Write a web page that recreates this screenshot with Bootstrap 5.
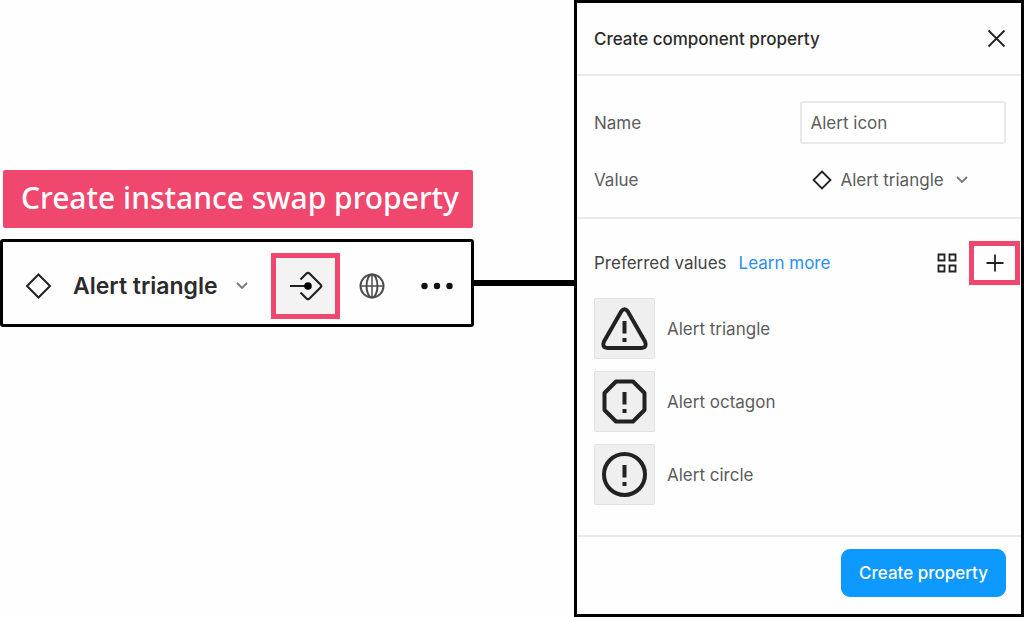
<!DOCTYPE html>
<html lang="en">
<head>
<meta charset="utf-8">
<meta name="viewport" content="width=device-width, initial-scale=1">
<title>Create instance swap property</title>
<link href="https://cdn.jsdelivr.net/npm/bootstrap@5.3.0/dist/css/bootstrap.min.css" rel="stylesheet">
<style>
  :root { --pink: #f0476f; --ink: #222; --soft: #5c5c5c; --rule: #e9e9e9; }
  body { font-family: Inter, "Liberation Sans", sans-serif; font-size: 17px; line-height: 24px; color: var(--soft); background: #fefefe; }
  svg { display: block; flex: none; fill: none; stroke: var(--ink); }
  .stage { display: grid; grid-template-columns: 574fr 450fr; }
  .callout { display: grid; grid-template-columns: 474fr 100fr; align-content: start; row-gap: 11px; padding-top: 170px; }
  .callout-title { margin: 0 1px 0 3px; padding: 7px 0 9px 18px; background: var(--pink); color: #fff; border-radius: 2px; font: 500 30px/42px "Noto Sans", "Open Sans", sans-serif; white-space: nowrap; }
  .toolbar { grid-column: 1; border: 3px solid #000; border-radius: 3px; background: #fefefe; padding: 11px 0 5px 20px; }
  .connector { height: 6px; background: #000; align-self: center; }
  .tool { border: 0; background: none; padding: 0; display: flex; align-items: center; justify-content: center; }
  .marked { border: 5px solid var(--pink); }
  .tool-swap { width: 69px; height: 66px; background: #f3f3f3; margin-left: 22px; }
  .tool-globe { width: 63px; height: 66px; }
  .tool-more { width: 68px; height: 66px; }
  .picker { appearance: none; border: 0; padding: 0; background: transparent url("data:image/svg+xml,%3Csvg xmlns='http://www.w3.org/2000/svg' width='14' height='10' fill='none' stroke='%23777' stroke-width='1.8'%3E%3Cpath d='M2 2l5 5 5-5'/%3E%3C/svg%3E") no-repeat right center; }
  .picker-lg { width: 176px; margin-left: 20px; font-size: 23px; line-height: 32px; font-weight: 600; color: #2b2b2b; }
  .picker-sm { width: 128px; margin-left: 9px; color: var(--soft); }
  .panel { border: 3px solid #000; background: #fefefe; min-height: 100vh; }
  .panel-part { padding: 0 15px 0 17px; border-bottom: 2px solid var(--rule); }
  .panel-head { height: 73px; color: #2b2b2b; }
  .panel-head h1 { font-size: 17px; line-height: 24px; font-weight: 500; }
  .field-grid { display: grid; grid-template-columns: 206fr 207fr; align-items: center; row-gap: 24px; padding-top: 25px; padding-bottom: 25px; }
  .name-box { border: 2px solid var(--rule); border-radius: 3px; padding: 8px 9px; font-size: 17px; line-height: 24px; color: var(--soft); background: #fff; height: 43px; }
  .values { padding-top: 22px; }
  .values-head { height: 44px; margin-right: -14px; margin-bottom: 13px; color: #444; }
  .values-head a { color: #2a8fee; text-decoration: none; }
  .values-list { display: grid; row-gap: 12px; }
  .values-list li { column-gap: 12px; }
  .tool-add { width: 51px; height: 44px; margin-left: 12px; }
  .tile { width: 61px; height: 61px; background: #efefef; border: 1px solid #e2e2e2; border-radius: 2px; }
  .panel-foot { padding: 12px 15px 17px; }
  .btn-make { --bs-btn-bg: #0d99ff; --bs-btn-border-color: #0d99ff; --bs-btn-color: #fff; --bs-btn-hover-bg: #0b87e0; --bs-btn-hover-color: #fff; --bs-btn-font-weight: 500; --bs-btn-font-size: 17px; --bs-btn-line-height: 24px; --bs-btn-padding-x: 17px; --bs-btn-padding-y: 11px; --bs-btn-border-radius: 9px; white-space: nowrap; }
</style>
</head>
<body>
<main class="stage">
  <section class="callout">
    <h2 class="callout-title">Create instance swap property</h2>
    <div class="toolbar d-flex align-items-center" role="toolbar" aria-label="Instance">
      <svg width="30" height="30" viewBox="0 0 30 30" stroke-width="2"><path d="M15.500 3.500L27 15 15.500 26.500 4 15z"/></svg>
      <select class="picker picker-lg" aria-label="Instance"><option>Alert triangle</option></select>
      <button class="tool tool-swap marked" aria-label="Create instance swap property">
        <svg width="36" height="32" viewBox="0 0 36 32" stroke-width="2.200"><path d="M12.500 9.500l6-6q1.500-1.500 3 0l11 11q1.500 1.500 0 3l-11 11q-1.500 1.500-3 0l-6-6M2 16h18"/><circle cx="20" cy="16" r="3.800" fill="#000" stroke="none"/></svg>
      </button>
      <button class="tool tool-globe" aria-label="Publish">
        <svg width="28" height="28" viewBox="0 0 28 28" stroke-width="2" style="stroke:#4d4d4d"><circle cx="14" cy="14" r="11.500"/><ellipse cx="14" cy="14" rx="5.500" ry="11.500"/><path d="M2.500 14h23M14 2.500v23" stroke-width="1.500"/></svg>
      </button>
      <button class="tool tool-more" aria-label="More">
        <svg width="34" height="8" viewBox="0 0 34 8"><g fill="#111" stroke="none"><circle cx="4.500" cy="4" r="3.200"/><circle cx="17" cy="4" r="3.200"/><circle cx="29.500" cy="4" r="3.200"/></g></svg>
      </button>
    </div>
    <div class="connector"></div>
  </section>

  <section class="panel d-flex flex-column">
    <header class="panel-part panel-head d-flex align-items-center justify-content-between">
      <h1 class="m-0">Create component property</h1>
      <button class="tool" aria-label="Close"><svg width="19" height="19" viewBox="0 0 19 19" stroke-width="1.800"><path d="M1.500 1.500l16 16M17.500 1.500l-16 16"/></svg></button>
    </header>
    <div class="panel-part field-grid">
      <label for="prop-name">Name</label>
      <input id="prop-name" class="name-box w-100" type="text" value="Alert icon">
      <label for="prop-value">Value</label>
      <div class="d-flex align-items-center ps-2 ms-1">
        <svg width="20" height="20" viewBox="0 0 20 20" stroke-width="1.800"><path d="M10 1.500L18.500 10 10 18.500 1.500 10z"/></svg>
        <select id="prop-value" class="picker picker-sm"><option>Alert triangle</option></select>
      </div>
    </div>
    <div class="panel-part values flex-grow-1">
      <div class="values-head d-flex align-items-center">
        <span>Preferred values</span>
        <a href="#" class="ms-2 ps-1">Learn more</a>
        <button class="tool ms-auto" aria-label="Show as grid"><svg width="20" height="20" viewBox="0 0 20 20" stroke-width="1.800"><path d="M1.500 1.500h6v6h-6zM12.500 1.500h6v6h-6zM1.500 12.500h6v6h-6zM12.500 12.500h6v6h-6z"/></svg></button>
        <button class="tool tool-add marked" aria-label="Add value"><svg width="18" height="18" viewBox="0 0 18 18" stroke-width="1.800"><path d="M9 0.500v17M0.500 9h17"/></svg></button>
      </div>
      <ul class="values-list list-unstyled m-0">
        <li class="d-flex align-items-center"><span class="tile d-flex align-items-center justify-content-center"><svg width="50" height="50" viewBox="0 0 50 50" stroke-width="4"><path d="M21.200 7.500Q24.500 3 27.800 7.500L45 37.500Q47.500 43.500 41.500 44H7.500Q1.500 43.500 4 37.500Z" stroke-linejoin="round"/><path d="M24.500 17v12.500M24.500 34v4"/></svg></span><span>Alert triangle</span></li>
        <li class="d-flex align-items-center"><span class="tile d-flex align-items-center justify-content-center"><svg width="50" height="50" viewBox="0 0 50 50" stroke-width="4"><path d="M16 4.500h17L44.500 16v17L33 44.500H16L4.500 33V16z" stroke-linejoin="round"/><path d="M24.500 15v12.500M24.500 32v4"/></svg></span><span>Alert octagon</span></li>
        <li class="d-flex align-items-center"><span class="tile d-flex align-items-center justify-content-center"><svg width="50" height="50" viewBox="0 0 50 50" stroke-width="4"><circle cx="24.500" cy="24.500" r="20.500"/><path d="M24.500 15v12.500M24.500 32v4"/></svg></span><span>Alert circle</span></li>
      </ul>
    </div>
    <footer class="panel-foot d-flex justify-content-end">
      <button class="btn btn-make" type="button">Create property</button>
    </footer>
  </section>
</main>
<script src="https://cdn.jsdelivr.net/npm/bootstrap@5.3.0/dist/js/bootstrap.bundle.min.js"></script>
</body>
</html>
